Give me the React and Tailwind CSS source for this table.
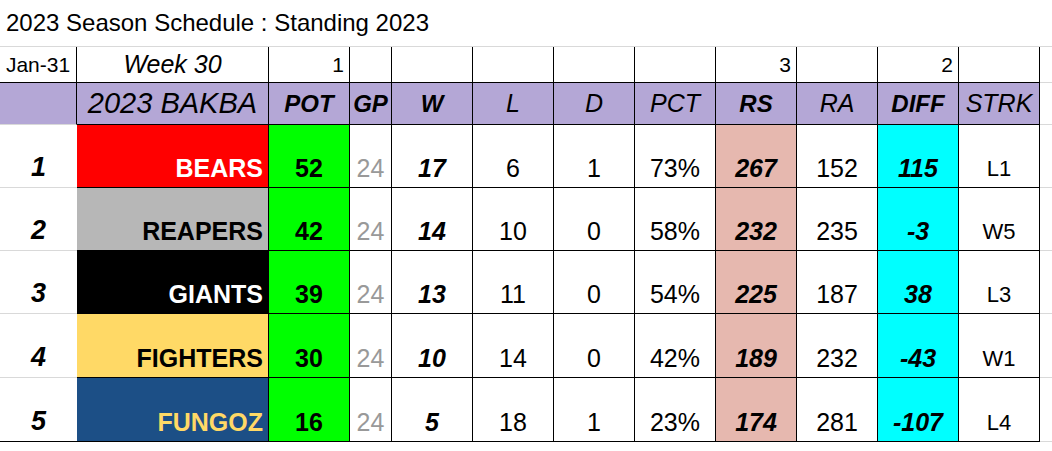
import React from "react";

const teams = [
  { rank: 1, name: "BEARS", bg: "bg-[#ff0000]", fg: "text-white", pot: 52, gp: 24, w: 17, l: 6, d: 1, pct: "73%", rs: 267, ra: 152, diff: 115, strk: "L1", h: "h-[63px]" },
  { rank: 2, name: "REAPERS", bg: "bg-[#b7b7b7]", fg: "text-black", pot: 42, gp: 24, w: 14, l: 10, d: 0, pct: "58%", rs: 232, ra: 235, diff: -3, strk: "W5", h: "h-[63px]" },
  { rank: 3, name: "GIANTS", bg: "bg-black", fg: "text-white", pot: 39, gp: 24, w: 13, l: 11, d: 0, pct: "54%", rs: 225, ra: 187, diff: 38, strk: "L3", h: "h-[63px]" },
  { rank: 4, name: "FIGHTERS", bg: "bg-[#ffd966]", fg: "text-black", pot: 30, gp: 24, w: 10, l: 14, d: 0, pct: "42%", rs: 189, ra: 232, diff: -43, strk: "W1", h: "h-[64px]" },
  { rank: 5, name: "FUNGOZ", bg: "bg-[#1c4f86]", fg: "text-[#ffd966]", pot: 16, gp: 24, w: 5, l: 18, d: 1, pct: "23%", rs: 174, ra: 281, diff: -107, strk: "L4", h: "h-[64px]" },
];

const cols = "grid grid-cols-[77px_192px_81px_42px_81px_81px_81px_81px_81px_81px_81px_81px_1fr]";
const cell = "border-r border-b border-black flex";

export default function App() {
  return (
    <div className="w-[1052px] h-[451px] bg-white text-black overflow-hidden font-['Liberation_Sans',Arial,sans-serif]">
      {/* sheet title */}
      <div className="h-[47px] border-b border-[#d9d9d9] flex items-center pl-[6px] text-[24px] leading-none">
        2023 Season Schedule : Standing 2023
      </div>

      {/* week row */}
      <div className={`${cols} h-[36px] text-[21px] leading-none`}>
        <div className={`${cell} items-center justify-center`}>Jan-31</div>
        <div className={`${cell} items-center justify-center italic text-[25px]`}>Week 30</div>
        <div className={`${cell} items-center justify-end pr-[5px]`}>1</div>
        <div className={cell}></div>
        <div className={cell}></div>
        <div className={cell}></div>
        <div className={cell}></div>
        <div className={cell}></div>
        <div className={`${cell} items-center justify-end pr-[5px]`}>3</div>
        <div className={cell}></div>
        <div className={`${cell} items-center justify-end pr-[5px]`}>2</div>
        <div className={cell}></div>
        <div className="border-b border-[#d9d9d9]"></div>
      </div>

      {/* header row */}
      <div className={`${cols} h-[42px] text-[25px] leading-none italic`}>
        <div className="bg-[#b4a7d6] border-r border-black border-b border-b-[#d9d9d9]"></div>
        <div className={`${cell} bg-[#b4a7d6] items-center justify-center text-[29px]`}>2023 BAKBA</div>
        <div className={`${cell} bg-[#b4a7d6] items-center justify-center font-bold text-[24px]`}>POT</div>
        <div className={`${cell} bg-[#b4a7d6] items-center justify-center font-bold text-[24px]`}>GP</div>
        <div className={`${cell} bg-[#b4a7d6] items-center justify-center font-bold text-[24px]`}>W</div>
        <div className={`${cell} bg-[#b4a7d6] items-center justify-center`}>L</div>
        <div className={`${cell} bg-[#b4a7d6] items-center justify-center`}>D</div>
        <div className={`${cell} bg-[#b4a7d6] items-center justify-center`}>PCT</div>
        <div className={`${cell} bg-[#b4a7d6] items-center justify-center font-bold text-[24px]`}>RS</div>
        <div className={`${cell} bg-[#b4a7d6] items-center justify-center`}>RA</div>
        <div className={`${cell} bg-[#b4a7d6] items-center justify-center font-bold text-[24px]`}>DIFF</div>
        <div className={`${cell} bg-[#b4a7d6] items-center justify-center`}>STRK</div>
        <div className="border-b border-[#d9d9d9]"></div>
      </div>

      {/* standings */}
      {teams.map((t, i) => {
        const last = i === teams.length - 1;
        return (
          <div key={t.rank} className={`${cols} ${t.h} text-[25px] leading-none`}>
            <div className={last ? "border-b border-black flex items-end justify-center pb-[6px] font-bold italic text-[27px]" : "border-b border-[#d9d9d9] flex items-end justify-center pb-[6px] font-bold italic text-[27px]"}>
              {t.rank}
            </div>
            <div className={`${cell} ${t.bg} ${t.fg} items-end justify-end pr-[5px] pb-[6px] font-bold`}>{t.name}</div>
            <div className={`${cell} bg-[#00ff00] items-end justify-center pb-[6px] font-bold`}>{t.pot}</div>
            <div className={`${cell} items-end justify-center pb-[6px] text-[#999999]`}>{t.gp}</div>
            <div className={`${cell} items-end justify-center pb-[6px] font-bold italic`}>{t.w}</div>
            <div className={`${cell} items-end justify-center pb-[6px]`}>{t.l}</div>
            <div className={`${cell} items-end justify-center pb-[6px]`}>{t.d}</div>
            <div className={`${cell} items-end justify-center pb-[6px]`}>{t.pct}</div>
            <div className={`${cell} bg-[#e6b8af] items-end justify-center pb-[6px] font-bold italic`}>{t.rs}</div>
            <div className={`${cell} items-end justify-center pb-[6px]`}>{t.ra}</div>
            <div className={`${cell} bg-[#00ffff] items-end justify-center pb-[6px] font-bold italic`}>{t.diff}</div>
            <div className={`${cell} items-end justify-center pb-[7px] text-[22px]`}>{t.strk}</div>
            <div className="border-b border-[#d9d9d9]"></div>
          </div>
        );
      })}
    </div>
  );
}
